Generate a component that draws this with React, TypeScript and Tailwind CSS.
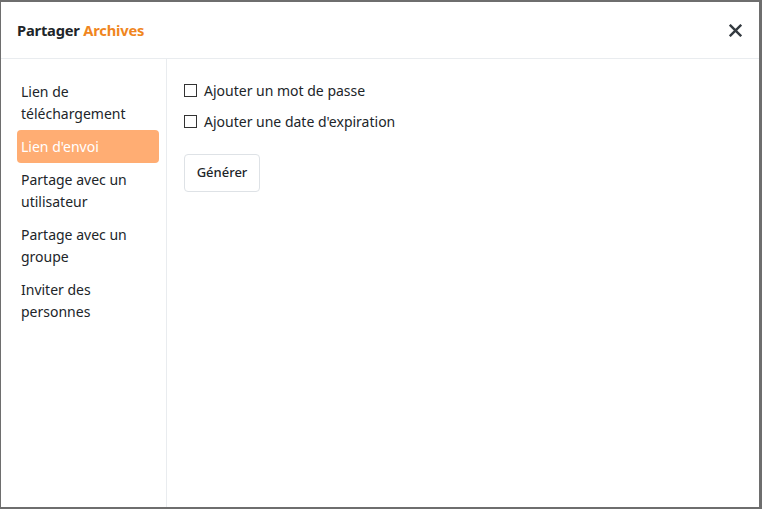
import React from 'react';

const items = [
    { label: 'Lien de téléchargement', active: false },
    { label: "Lien d'envoi", active: true },
    { label: 'Partage avec un utilisateur', active: false },
    { label: 'Partage avec un groupe', active: false },
    { label: 'Inviter des personnes', active: false },
];

const options = ['Ajouter un mot de passe', "Ajouter une date d'expiration"];

export default function App() {
    return (
        <div className="w-[762px] h-[509px] bg-[#6e6e6e] overflow-hidden pt-[2px] pl-[1px] font-['Segoe_UI','Noto_Sans',sans-serif] text-[#212529]">
            <div className="w-[758px] h-[505px] bg-white flex flex-col">
                <header className="h-[57px] shrink-0 flex items-center justify-between pl-[16px] pr-[17px] border-b border-[#e9ecef]">
                    <h1 className="text-[14.7px] font-bold tracking-[-0.2px]">
                        Partager <span className="text-[#f0861e]">Archives</span>
                    </h1>
                    <button className="text-[#343a40]">
                        <svg width="13" height="13" viewBox="0 0 12 12">
                            <path d="M1.5 1.5 L10.5 10.5 M10.5 1.5 L1.5 10.5" stroke="currentColor" strokeWidth="2.2" strokeLinecap="square" />
                        </svg>
                    </button>
                </header>

                <div className="flex flex-1">
                    <nav className="w-[166px] shrink-0 border-r border-[#e9ecef] pt-[16px] pl-[16px] pr-[7px] flex flex-col">
                        {items.map((it) => (
                            <div
                                key={it.label}
                                className={
                                    'px-[4px] py-[5.5px] text-[14px] leading-[22px] rounded-[4px] ' +
                                    (it.active ? 'bg-[#ffad73] text-white' : '')
                                }
                            >
                                {it.label}
                            </div>
                        ))}
                    </nav>

                    <section className="flex-1 pl-[17px] pt-[16px] flex flex-col items-start">
                        {options.map((o) => (
                            <label key={o} className="h-[31px] flex items-center gap-[7px] text-[14px]">
                                <span className="w-[13px] h-[13px] border border-[#333] bg-white" />
                                {o}
                            </label>
                        ))}
                        <button className="mt-[17px] h-[38px] w-[76px] border border-[#dee2e6] rounded-[4px] text-[13px] font-medium text-[#212529]">
                            Générer
                        </button>
                    </section>
                </div>
            </div>
        </div>
    );
}
